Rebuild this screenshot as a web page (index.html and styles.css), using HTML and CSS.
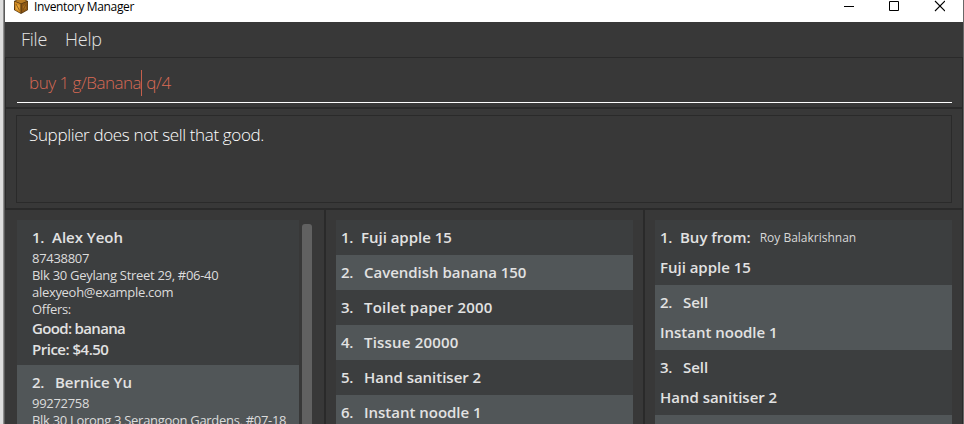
FILE: index.html
```html
<!DOCTYPE html>
<html lang="en">
<head>
<meta charset="utf-8">
<title>Inventory Manager</title>
<link rel="stylesheet" href="styles.css">
</head>
<body>
<div class="desktop"></div>
<main class="window">
  <header class="titlebar">
    <svg class="logo" width="16" height="16" viewBox="0 0 16 16">
      <path d="M1 3 8 0l7 3v9l-7 4-7-4z" fill="#4f3310"/>
      <path d="M1.500 3.500 7.500 6v9L2 12z" fill="#d08a22"/>
      <path d="M8.500 6 14.500 3.500v8.300L8.500 15z" fill="#8c5715"/>
      <path d="M2 3 8 .5 14 3 8 5.500z" fill="#b97d26"/>
      <path d="M3 6v5l3.500 2V7.500z" fill="#eaa83b"/>
      <path d="M10 8v4.500l3-1.800V6.500z" fill="#a86d1d"/>
      <path d="m3 6 3.500 6.500M13 6.500 10 12" stroke="#74480f" stroke-width=".8"/>
    </svg>
    <span class="title">Inventory Manager</span>
    <div class="controls">
      <svg width="10" height="12" viewBox="0 0 10 12"><path d="M0 6.500h10" stroke="#000"/></svg>
      <svg width="10" height="12" viewBox="0 0 10 12"><path d="M.5 1.500h9v9h-9z" fill="none" stroke="#000"/></svg>
      <svg width="11" height="12" viewBox="0 0 11 12"><path d="m1 1 10 10M11 1 1 11" stroke="#000" stroke-width="1.100"/></svg>
    </div>
  </header>
  <nav class="menu"><span>File</span><span>Help</span></nav>
  <section class="command"><div class="field"><span class="typed">buy 1 g/Banana</span><i class="caret"></i><span class="rest">q/4</span></div></section>
  <section class="result"><div class="message">Supplier does not sell that good.</div></section>
  <section class="panels">
    <div class="panel suppliers">
      <ul class="list">
        <li class="card">
          <h2 class="name"><b>1.</b><span>Alex Yeoh</span></h2>
          <p>87438807</p><p>Blk 30 Geylang Street 29, #06-40</p><p>alexyeoh@example.com</p><p>Offers:</p>
          <div class="offer">Good: banana</div><div class="offer price">Price: $4.50</div>
        </li>
        <li class="card">
          <h2 class="name"><b>2.</b><span>Bernice Yu</span></h2>
          <p>99272758</p><p>Blk 30 Lorong 3 Serangoon Gardens, #07-18</p>
        </li>
      </ul>
      <div class="scrollbar"></div>
    </div>
    <div class="panel goods">
      <ul class="list">
        <li class="row"><b>1.</b><span>Fuji apple 15</span></li>
        <li class="row"><b>2.</b><span>Cavendish banana 150</span></li>
        <li class="row"><b>3.</b><span class="wide">Toilet paper 2000</span></li>
        <li class="row"><b>4.</b><span class="wide">Tissue 20000</span></li>
        <li class="row"><b>5.</b><span>Hand sanitiser 2</span></li>
        <li class="row"><b>6.</b><span>Instant noodle 1</span></li>
      </ul>
    </div>
    <div class="panel orders">
      <ul class="list">
        <li class="order"><div class="line"><b>1.</b><span>Buy from:</span><small>Roy Balakrishnan</small></div><div class="line">Fuji apple 15</div></li>
        <li class="order"><div class="line"><b>2.</b><span>Sell</span></div><div class="line">Instant noodle 1</div></li>
        <li class="order"><div class="line"><b>3.</b><span>Sell</span></div><div class="line">Hand sanitiser 2</div></li>
        <li class="order"></li>
      </ul>
    </div>
  </section>
</main>
<div class="edge"></div>
</body>
</html>
```
FILE: styles.css
```css
* { box-sizing: border-box; }
body {
  margin: 0;
  height: 424px;
  display: flex;
  overflow: hidden;
  background: #383838;
  font-family: "Open Sans", "Noto Sans", sans-serif;
  white-space: nowrap;
}
h2, p, ul { margin: 0; padding: 0; list-style: none; }
b { font-weight: inherit; }
.desktop {
  width: 5px;
  flex: none;
  background: linear-gradient(90deg, #dedede 0 3px, #8e8e8e 3px 4px, #5b5b5b 4px 5px);
}
.edge { width: 1px; flex: none; background: #686868; }
.window { flex: 1; min-width: 0; display: flex; flex-direction: column; }

.titlebar {
  height: 22px;
  flex: none;
  display: flex;
  align-items: flex-start;
  padding-left: 8px;
  background: #fff;
}
.logo { margin-top: -2px; }
.title { margin-left: 5px; font-size: 12px; line-height: 14px; color: #000; letter-spacing: -.35px; }
.controls { margin-left: auto; display: flex; gap: 35px; padding-right: 18px; }

.menu {
  height: 35px;
  flex: none;
  display: flex;
  gap: 18px;
  padding-left: 16px;
  font-size: 18px;
  line-height: 35px;
  font-weight: 300;
  color: #e4e4e4;
  letter-spacing: -.25px;
}

.command {
  height: 52px;
  flex: none;
  padding: 0 10px 0 11px;
  border: 1px solid #2a2a2a;
  border-bottom: 2px solid #2a2a2a;
}
.field {
  height: 45px;
  display: flex;
  align-items: center;
  padding: 5px 0 0 12px;
  border-bottom: 1px solid #fff;
  font-size: 17px;
  font-weight: 300;
  color: #d96a55;
}
.typed { letter-spacing: -.48px; }
.caret { width: 1px; height: 26px; background: #c45f4c; }
.rest { margin-left: 4px; letter-spacing: -.3px; }

.result {
  height: 101px;
  flex: none;
  padding: 6px 10px 6px;
  border: solid #2a2a2a;
  border-width: 0 1px 2px;
}
.message {
  height: 88px;
  border: 1px solid #2a2a2a;
  padding: 8px 12px;
  font-size: 17px;
  line-height: 21px;
  font-weight: 300;
  color: #fff;
  letter-spacing: -.35px;
}

.panels { flex: 1; min-height: 0; display: flex; }
.panel { padding-top: 10px; overflow: hidden; display: flex; align-items: flex-start; flex: none; }
.suppliers { width: 321px; padding-left: 12px; border-right: 2px solid #2a2a2a; }
.goods { width: 319px; padding-left: 10px; border-right: 2px solid #2a2a2a; }
.orders { width: 318px; padding-left: 10px; border-right: 1px solid #2a2a2a; }
.list { width: 297px; font-size: 15px; font-weight: 600; color: #e2e2e2; letter-spacing: -.02px; }
.suppliers .list { width: 282px; }
.list li { background: #3c3e3f; }
.list li:nth-child(even) { background: #515658; }
.scrollbar { width: 10px; height: 240px; margin: 4px 0 0 3px; border-radius: 3px 3px 0 0; background: #616161; }

.list b { width: 13px; flex: none; letter-spacing: -.3px; }
.list li:first-child b { width: 10px; }
.card { height: 145px; padding: 5px 0 0 15px; }
.name { height: 25px; font-size: 15px; line-height: 25px; font-weight: 600; display: flex; gap: 10px; }
.card p { height: 17px; font-size: 13px; line-height: 17px; font-weight: 400; color: #dcdcdc; letter-spacing: -.3px; }
.offer { height: 21px; line-height: 21px; letter-spacing: -.66px; }
.price { letter-spacing: -.5px; }

.row { height: 35px; line-height: 35px; padding-left: 5px; display: flex; gap: 10px; }
.wide { letter-spacing: .2px; }
.order { height: 65px; padding: 2px 0 0 5px; }
.line { height: 30px; line-height: 31px; display: flex; gap: 10px; }
.line small { margin-left: -1px; font-size: 12px; font-weight: 400; letter-spacing: 0; color: #d8d8d8; }
```
